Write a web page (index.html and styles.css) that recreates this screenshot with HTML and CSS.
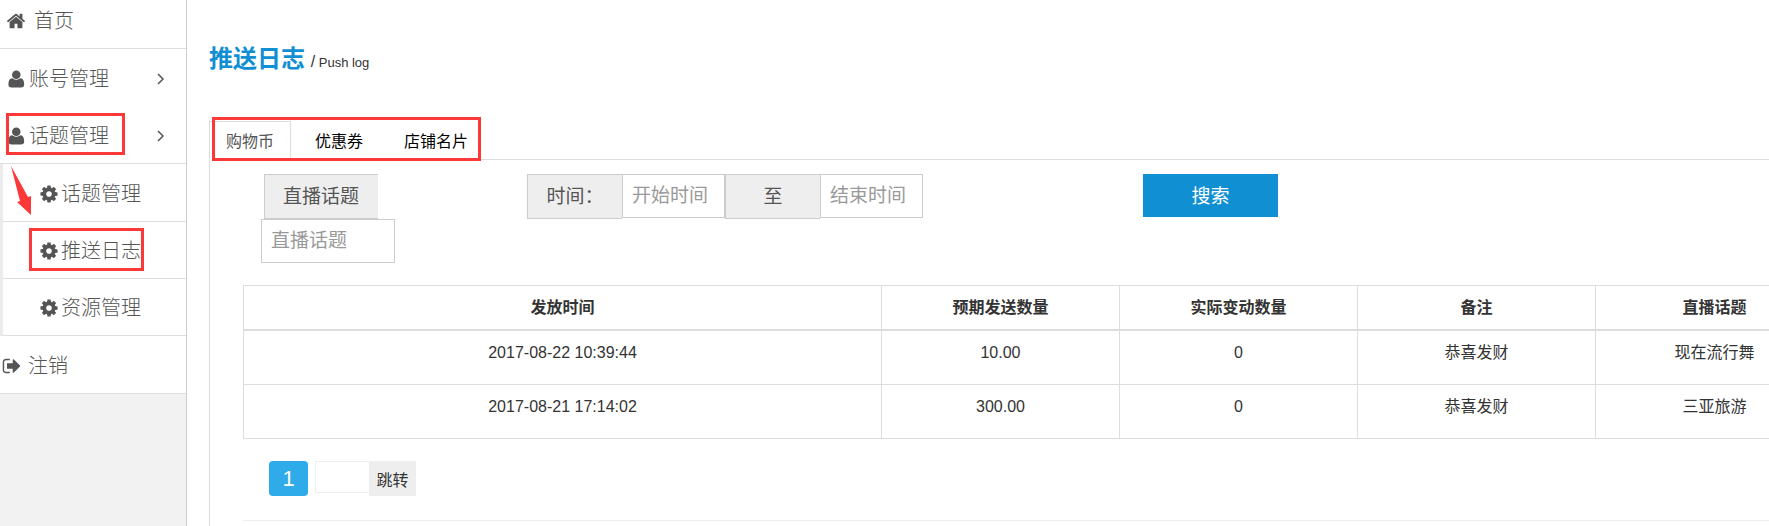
FILE: index.html
```html
<!DOCTYPE html>
<html lang="zh-CN">
<head>
    <meta charset="UTF-8" />
    <meta name="viewport" content="width=device-width, initial-scale=1" />
    <title>推送日志</title>
    <link rel="stylesheet" href="styles.css">
</head>
<body>
<svg class="sprite" aria-hidden="true">
    <symbol id="icon-home" viewBox="0 0 1792 1792"><path d="M1472 992v480q0 26-19 45t-45 19h-384v-384h-256v384h-384q-26 0-45-19t-19-45v-480q0-1 .5-3t.5-3l575-474 575 474q1 2 1 6zm223-69l-62 74q-8 9-21 11h-3q-13 0-21-7l-692-577-692 577q-12 8-24 7-13-2-21-11l-62-74q-8-10-7-23.500t11-21.500l719-599q32-26 76-26t76 26l244 204v-195q0-14 9-23t23-9h192q14 0 23 9t9 23v408l219 182q10 8 11 21.500t-7 23.500z"/></symbol>
    <symbol id="icon-user" viewBox="0 0 1792 1792"><path d="M1536 1405q0 120-73 189.500t-194 69.500h-874q-121 0-194-69.500t-73-189.500q0-53 3.500-103.500t14-109 26.500-108.500 43-97.500 62-81 85.500-53.500 111.500-20q9 0 42 21.500t74.500 48 108 48 133.500 21.500 133.500-21.500 108-48 74.500-48 42-21.500q61 0 111.500 20t85.500 53.500 62 81 43 97.500 26.500 108.500 14 109 3.500 103.500zm-320-893q0 159-112.500 271.500t-271.500 112.500-271.500-112.500-112.500-271.500 112.500-271.500 271.500-112.500 271.500 112.500 112.500 271.500z"/></symbol>
    <symbol id="icon-cog" viewBox="0 0 1792 1792"><path d="M1152 896q0-106-75-181t-181-75-181 75-75 181 75 181 181 75 181-75 75-181zm512-109v222q0 12-8 23t-20 13l-185 28q-19 54-39 91 35 50 107 138 10 12 10 25t-9 23q-27 37-99 108t-94 71q-12 0-26-9l-138-108q-44 23-91 38-16 136-29 186-7 28-36 28h-222q-14 0-24.500-8.500t-11.500-21.500l-28-184q-49-16-90-37l-141 107q-10 9-25 9-14 0-25-11-126-114-165-168-7-10-7-23 0-12 8-23 15-21 51-66.500t54-70.500q-27-50-41-99l-183-27q-13-2-21-12.500t-8-23.500v-222q0-12 8-23t19-13l186-28q14-46 39-92-40-57-107-138-10-12-10-24 0-10 9-23 26-36 98.500-107.500t94.500-71.500q13 0 26 10l138 107q44-23 91-38 16-136 29-186 7-28 36-28h222q14 0 24.500 8.500t11.500 21.500l28 184q49 16 90 37l142-107q9-9 24-9 13 0 25 10 129 119 165 170 7 8 7 22 0 12-8 23-15 21-51 66.500t-54 70.500q26 50 41 98l183 28q13 2 21 12.500t8 23.500z"/></symbol>
    <symbol id="icon-logout" viewBox="0 0 1792 1792"><path d="M704 1440q0 4 1 20t.5 26.500-3 23.500-10 19.500-20.500 6.500h-320q-119 0-203.500-84.500t-84.500-203.500v-704q0-119 84.500-203.500t203.500-84.500h320q13 0 22.500 9.500t9.500 22.500q0 4 1 20t.5 26.500-3 23.500-10 19.500-20.500 6.500h-320q-66 0-113 47t-47 113v704q0 66 47 113t113 47h312l11.500 1 11.500 3 8 5.500 7 9 2 13.500zm928-544q0 26-19 45l-544 544q-19 19-45 19t-45-19-19-45v-288h-448q-26 0-45-19t-19-45v-384q0-26 19-45t45-19h448v-288q0-26 19-45t45-19 45 19l544 544q19 19 19 45z"/></symbol>
</svg>

<div class="layout">
    <nav class="sidebar">
        <ul class="menu">
            <li class="menu-home"><a href="#"><svg class="icon"><use href="#icon-home"/></svg>首页</a></li>
            <li class="menu-plain">
                <a href="#"><svg class="icon"><use href="#icon-user"/></svg>账号管理
                    <svg class="chevron" viewBox="0 0 8 12"><path d="M1 1l5 5-5 5"/></svg></a>
            </li>
            <li>
                <a href="#"><svg class="icon"><use href="#icon-user"/></svg>话题管理
                    <svg class="chevron" viewBox="0 0 8 12"><path d="M1 1l5 5-5 5"/></svg>
                    <span class="mark mark-topic"></span></a>
            </li>
            <li class="menu-sub">
                <ul class="submenu">
                    <li><a href="#"><svg class="icon"><use href="#icon-cog"/></svg>话题管理</a></li>
                    <li><a href="#"><svg class="icon"><use href="#icon-cog"/></svg>推送日志<span class="mark mark-log"></span></a></li>
                    <li><a href="#"><svg class="icon"><use href="#icon-cog"/></svg>资源管理</a></li>
                </ul>
                <svg class="arrow" viewBox="0 0 21 50"><path d="M0 0l17 31 3-1v19L6 36l3-1z"/></svg>
            </li>
            <li class="menu-logout"><a href="#"><svg class="icon"><use href="#icon-logout"/></svg>注销</a></li>
        </ul>
    </nav>

    <main class="main">
        <h1>推送日志 <small><span>/</span> Push log</small></h1>

        <div class="tabs">
            <a href="#" class="tab active">购物币</a>
            <a href="#" class="tab">优惠券</a>
            <a href="#" class="tab">店铺名片</a>
            <span class="mark mark-tabs"></span>
        </div>

        <div class="panel">
            <form class="search">
                <div class="field-topic">
                    <label class="addon" for="topic">直播话题</label>
                    <input class="control" type="text" id="topic" placeholder="直播话题" />
                </div>
                <div class="field-time">
                    <label class="addon" for="startTime">时间：</label>
                    <input class="control" type="text" id="startTime" placeholder="开始时间" />
                    <label class="addon" for="endTime">至</label>
                    <input class="control" type="text" id="endTime" placeholder="结束时间" />
                </div>
                <button type="button" class="btn-search">搜索</button>
            </form>

            <table class="log-table">
                <thead>
                <tr>
                    <th class="col-time">发放时间</th>
                    <th>预期发送数量</th>
                    <th>实际变动数量</th>
                    <th>备注</th>
                    <th>直播话题</th>
                </tr>
                </thead>
                <tbody>
                <tr>
                    <td>2017-08-22 10:39:44</td>
                    <td>10.00</td>
                    <td>0</td>
                    <td>恭喜发财</td>
                    <td>现在流行舞</td>
                </tr>
                <tr>
                    <td>2017-08-21 17:14:02</td>
                    <td>300.00</td>
                    <td>0</td>
                    <td>恭喜发财</td>
                    <td>三亚旅游</td>
                </tr>
                </tbody>
            </table>

            <div class="pager">
                <button type="button" class="page-current">1</button>
                <input type="text" class="page-input" aria-label="页码" />
                <button type="button" class="page-jump">跳转</button>
            </div>
            <hr />
        </div>
    </main>
</div>
</body>
</html>
```
FILE: styles.css
```css
:root {
    --primary: #118fd3;
    --mark: #fc3838;
    --text: #333;
    --menu-text: #555;
    --line: #ddd;
    --field-line: #ccc;
    --field-bg: #eee;
}
* {
    box-sizing: border-box;
}
body {
    margin: 0;
    font-family: "Liberation Sans", "Noto Sans CJK SC", sans-serif;
    font-size: 16px;
    line-height: 24px;
    color: var(--text);
    background-color: #fff;
}
a {
    color: inherit;
    text-decoration: none;
}
ul {
    list-style: none;
    margin: 0;
    padding: 0;
}
input, button {
    font-family: inherit;
    border-radius: 0;
}
.sprite {
    display: none;
}
.layout {
    display: flex;
    min-height: 100vh;
}

/* 左侧菜单 */
.sidebar {
    flex: 0 0 187px;
    background-color: #f2f2f2;
    border-right: 1px solid var(--field-line);
}
.menu {
    background-color: #fff;
}
.menu li {
    border-bottom: 1px solid var(--line);
}
.menu a {
    position: relative;
    display: flex;
    align-items: center;
    height: 57px;
    padding: 2px 0 0 7px;
    gap: 2px;
    font-size: 20px;
    font-weight: 300;
    color: var(--menu-text);
}
.menu .menu-home a {
    height: 48px;
    padding: 0 0 6px 6px;
    gap: 8px;
}
.menu .menu-plain {
    border-bottom: none;
}
.menu .menu-sub {
    position: relative;
    border-bottom: none;
    border-left: 3px solid #ebebeb;
    padding-top: 1px;
}
.menu .submenu a {
    height: 56px;
    padding-left: 36px;
}
.menu .menu-logout a {
    padding-left: 2px;
    gap: 6px;
}
.icon {
    width: 20px;
    height: 20px;
    fill: var(--menu-text);
}
.chevron {
    width: 8px;
    height: 12px;
    margin-left: auto;
    margin-right: 21px;
    fill: none;
    stroke: var(--menu-text);
    stroke-width: 1.5;
}

/* 红色标注 */
.mark {
    position: absolute;
    border: 3px solid var(--mark);
    pointer-events: none;
}
.mark-topic {
    left: 6px;
    top: 7px;
    width: 119px;
    height: 42px;
}
.mark-log {
    left: 26px;
    top: 6px;
    width: 115px;
    height: 43px;
}
.mark-tabs {
    left: 3px;
    top: -4px;
    width: 269px;
    height: 44px;
}
.arrow {
    position: absolute;
    left: 8px;
    top: 2px;
    width: 21px;
    height: 50px;
    fill: var(--mark);
}

/* 右侧内容 */
.main {
    flex: 1;
    display: flex;
    flex-direction: column;
    min-width: 0;
    overflow: hidden;
    padding: 43px 0 0 22px;
}
h1 {
    margin: 0 0 42px;
    font-size: 24px;
    line-height: 32px;
    color: var(--primary);
}
h1 small {
    margin-left: -1px;
    font-size: 13px;
    font-weight: normal;
    color: var(--text);
}
h1 small span {
    font-size: 16px;
}
.tabs {
    position: relative;
    display: flex;
    gap: 7px;
}
.tab {
    height: 38px;
    padding: 8px 16px;
    border: 1px solid transparent;
    border-bottom: none;
    color: #000;
}
.tab.active {
    height: 39px;
    margin-bottom: -1px;
    border-color: var(--line);
    background-color: #fff;
    color: var(--menu-text);
}
.panel {
    flex: 1;
    border-top: 1px solid var(--line);
    border-left: 1px solid var(--line);
    padding: 14px 0 0 33px;
}
.search {
    display: grid;
    grid-template-columns: 266px 616px 135px;
    align-items: start;
    padding-left: 18px;
    margin-bottom: 22px;
}
.addon {
    height: 45px;
    padding: 0 18px;
    border: 1px solid var(--field-line);
    border-right: none;
    background-color: var(--field-bg);
    font-size: 19px;
    line-height: 43px;
    text-align: center;
    color: var(--menu-text);
}
.control {
    height: 44px;
    padding: 0 9px;
    border: 1px solid var(--field-line);
    font-size: 19px;
    color: var(--menu-text);
}
.control::placeholder {
    color: #999;
}
.field-topic {
    display: flex;
    flex-direction: column;
    align-items: flex-start;
}
.field-topic .addon {
    margin-left: 3px;
    padding-right: 19px;
}
.field-topic .control {
    width: 134px;
}
.field-time {
    display: flex;
    align-items: flex-start;
}
.field-time .addon {
    width: 95px;
    white-space: nowrap;
}
.field-time .control {
    width: 103px;
}
.btn-search {
    height: 43px;
    padding: 0 0 3px;
    border: none;
    background-color: var(--primary);
    font-size: 19px;
    color: #fff;
    cursor: pointer;
}
.log-table {
    min-width: 1591px;
    table-layout: fixed;
    border-collapse: collapse;
    text-align: center;
}
.log-table th,
.log-table td {
    border: 1px solid var(--line);
    vertical-align: top;
    padding: 10px 10px 9px;
}
.log-table th {
    border-bottom-width: 2px;
    width: 238px;
}
.log-table .col-time {
    width: 638px;
}
.log-table td {
    padding-bottom: 19px;
}
.pager {
    display: flex;
    align-items: flex-start;
    margin: 22px 0 24px 26px;
}
.page-current {
    width: 39px;
    height: 35px;
    margin-right: 7px;
    padding: 0;
    border: none;
    border-radius: 4px;
    background-color: #2eabe8;
    font-size: 22px;
    color: #fff;
}
.page-input {
    width: 54px;
    height: 32px;
    border: 1px solid var(--field-bg);
    border-right: none;
}
.page-jump {
    width: 47px;
    height: 35px;
    padding: 0;
    border: none;
    background-color: var(--field-bg);
    font-size: 16px;
    color: var(--text);
}
hr {
    margin: 0;
    border: none;
    border-top: 1px solid #eee;
}
```
